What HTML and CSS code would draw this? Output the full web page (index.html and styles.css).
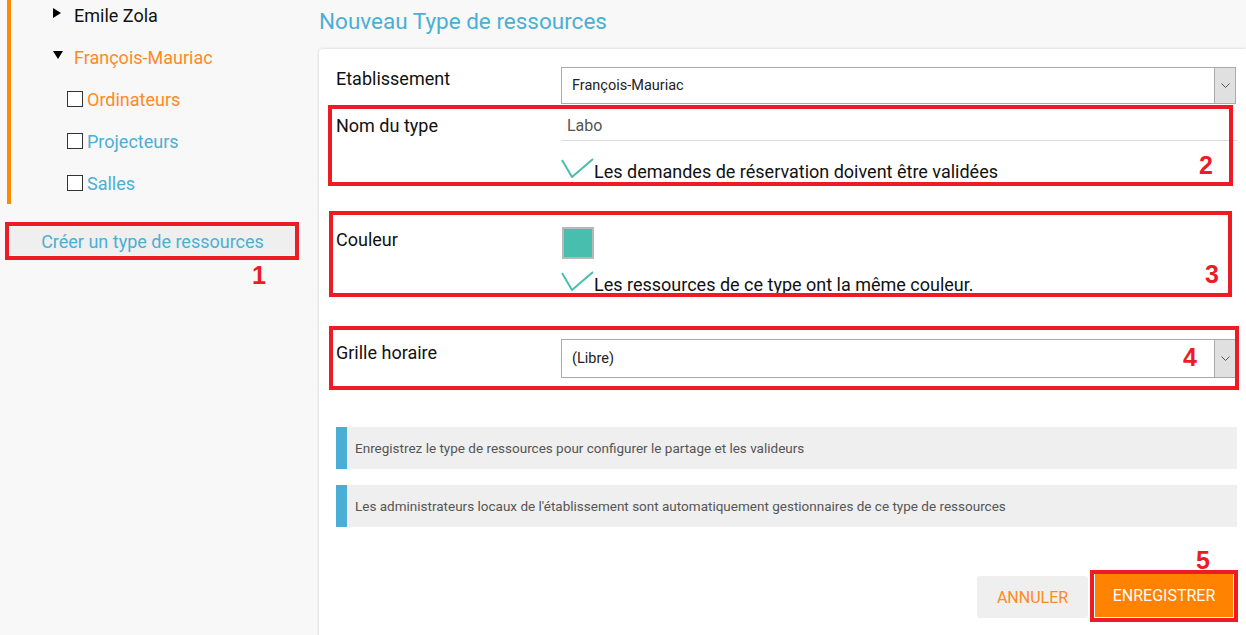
FILE: index.html
```html
<!DOCTYPE html>
<html lang="fr">
<head>
<meta charset="utf-8">
<title>Nouveau Type de ressources</title>
<link rel="stylesheet" href="styles.css">
</head>
<body>
<div class="page">
  <aside class="sidebar">
    <ul class="tree">
      <li class="node"><span class="tri tri-right"></span><span class="node-label">Emile Zola</span></li>
      <li class="node node-open"><span class="tri tri-down"></span><span class="node-label">François-Mauriac</span></li>
      <li class="leaf"><span class="box"></span><span class="leaf-label leaf-active">Ordinateurs</span></li>
      <li class="leaf"><span class="box"></span><span class="leaf-label">Projecteurs</span></li>
      <li class="leaf"><span class="box"></span><span class="leaf-label">Salles</span></li>
    </ul>
    <div class="create-wrap">
      <button class="create-btn">Créer un type de ressources</button>
      <span class="mark mark-1"><span class="num num-1">1</span></span>
    </div>
  </aside>

  <main class="main">
    <h1 class="title">Nouveau Type de ressources</h1>
    <section class="card">
      <div class="row row-etab">
        <div class="label">Etablissement</div>
        <div class="select"><span class="select-text">François-Mauriac</span><span class="select-arrow"><svg width="9" height="5" viewBox="0 0 9 5"><polyline points="0.5,0.5 4.5,4.5 8.5,0.5" fill="none" stroke="#555" stroke-width="1"/></svg></span></div>
      </div>

      <div class="row row-nom">
        <div class="label label-nom">Nom du type</div>
        <div class="field">
          <div class="input">Labo</div>
          <div class="check-line check-nom"><svg class="check" width="33" height="20" viewBox="0 0 33 20"><polyline points="1,2 11,19 32,1" fill="none" stroke="#48bfae" stroke-width="2"/></svg><span>Les demandes de réservation doivent être validées</span></div>
        </div>
        <span class="mark mark-2"><span class="num num-2">2</span></span>
      </div>

      <div class="row row-color">
        <div class="label label-color">Couleur</div>
        <div class="field">
          <div class="swatch"></div>
          <div class="check-line check-color"><svg class="check" width="33" height="20" viewBox="0 0 33 20"><polyline points="1,2 11,19 32,1" fill="none" stroke="#48bfae" stroke-width="2"/></svg><span>Les ressources de ce type ont la même couleur.</span></div>
        </div>
        <span class="mark mark-3"><span class="num num-3">3</span></span>
      </div>

      <div class="row row-grille">
        <div class="label label-grille">Grille horaire</div>
        <div class="select select-tall"><span class="select-text">(Libre)</span><span class="select-arrow"><svg width="9" height="5" viewBox="0 0 9 5"><polyline points="0.5,0.5 4.5,4.5 8.5,0.5" fill="none" stroke="#555" stroke-width="1"/></svg></span></div>
        <span class="mark mark-4"><span class="num num-4">4</span></span>
      </div>

      <div class="info info-first">Enregistrez le type de ressources pour configurer le partage et les valideurs</div>
      <div class="info">Les administrateurs locaux de l'établissement sont automatiquement gestionnaires de ce type de ressources</div>

      <div class="actions">
        <button class="btn btn-cancel">ANNULER</button>
        <div class="save-wrap">
          <button class="btn btn-save">ENREGISTRER</button>
          <span class="mark mark-5"><span class="num num-5">5</span></span>
        </div>
      </div>
    </section>
  </main>
</div>
</body>
</html>
```

FILE: styles.css
```css
* { box-sizing: border-box; }
html, body { margin: 0; padding: 0; }
body {
  background: #f8f8f8;
  font-family: Roboto, "Liberation Sans", Arial, sans-serif;
  color: #111;
  width: 1246px;
  height: 635px;
  overflow: hidden;
}
.page { display: flex; align-items: flex-start; }

/* Sidebar */
.sidebar { width: 319px; flex: none; padding-left: 7px; }
.tree {
  list-style: none;
  margin: -6px 0 0 0;
  padding: 0 0 0 42px;
  border-left: 4px solid #ff8a00;
}
.tree li { height: 42px; display: flex; align-items: center; font-size: 18px; }
.tri { width: 0; height: 0; display: inline-block; }
.tri-right {
  border-top: 5px solid transparent;
  border-bottom: 5px solid transparent;
  border-left: 8px solid #000;
  margin-right: 13px;
  margin-top: -4px;
}
.tri-down {
  border-left: 5px solid transparent;
  border-right: 5px solid transparent;
  border-top: 8px solid #000;
  margin-right: 11px;
  margin-top: -4px;
}
.node-label { color: #111; }
.node-open .node-label { color: #ff8a1f; }
.leaf { padding-left: 14px; }
.box {
  width: 16px; height: 16px;
  border: 1.5px solid #333;
  background: #fff;
  margin-right: 4px;
}
.leaf-label { color: #4bafd5; }
.leaf-label.leaf-active { color: #ff8a1f; }

.create-wrap {
  position: relative;
  margin: 23px 0 0 3px;
  width: 285px;
}
.create-btn {
  display: block;
  width: 100%;
  height: 28px;
  border: none;
  background: #efefef;
  color: #4bafd5;
  font-family: inherit;
  font-size: 18px;
  padding: 0;
}

/* Annotation marks */
.mark {
  position: absolute;
  border: 4px solid #ed1c24;
  pointer-events: none;
}
.num {
  position: absolute;
  color: #ed1c24;
  font-family: "Liberation Sans", Arial, sans-serif;
  font-weight: bold;
  font-size: 25px;
  line-height: 1;
}
.mark-1 { top: -5px; left: -5px; right: -4px; bottom: -5px; }
.num-1 { top: 37px; right: 29px; }
.mark-2 { top: -7px; left: -8px; right: 3px; bottom: -2px; }
.num-2 { right: 16px; bottom: 4px; }
.mark-3 { top: -16px; left: -7px; right: 4px; bottom: 0; }
.num-3 { right: 9px; bottom: 6px; }
.mark-4 { top: -13px; left: -7px; right: -3px; bottom: -12px; }
.num-4 { right: 38px; bottom: 16px; }
.mark-5 { top: -4px; left: -5px; right: -5px; bottom: -5px; }
.num-5 { top: -26px; right: 24px; }

/* Main */
.main { flex: 1; padding-top: 6px; }
.title {
  margin: 0;
  font-weight: normal;
  font-size: 22.5px;
  line-height: 30px;
  color: #4bafd5;
}
.card {
  position: relative;
  margin-top: 13px;
  background: #fff;
  border-radius: 4px 0 0 0;
  box-shadow: 0 0 3px rgba(0,0,0,0.18);
  padding: 18px 10px 20px 17px;
  height: 600px;
}
.row {
  position: relative;
  display: grid;
  grid-template-columns: 225px 1fr;
  align-items: start;
}
.label { font-size: 18px; line-height: 24px; color: #111; }

.select {
  position: relative;
  height: 37px;
  border: 1px solid #aaa;
  background: #fff;
  display: flex;
  align-items: center;
  font-size: 14.5px;
  color: #222;
}
.select-tall { height: 39px; }
.select-text { flex: 1; padding-left: 10px; }
.select-arrow {
  align-self: stretch;
  width: 21px;
  background: #e0e0e0;
  border-left: 1px solid #aaa;
  display: flex;
  align-items: center;
  justify-content: center;
}

.row-nom { margin-top: 8px; }
.label-nom { line-height: 28px; }
.input {
  height: 29px;
  line-height: 28px;
  border-bottom: 1px solid #ddd;
  padding-left: 6px;
  font-size: 16px;
  color: #555;
  margin-right: -1px;
}
.check-line {
  display: flex;
  align-items: center;
  height: 26px;
  font-size: 18px;
  color: #111;
}
.check { flex: none; margin-top: -6px; }
.check-nom { margin-top: 17px; }

.row-color { margin-top: 43px; }
.label-color { line-height: 26px; }
.swatch {
  width: 32px; height: 32px;
  border: 2px solid #b8b8b8;
  background: #48bfae;
  margin-left: 1px;
}
.check-color { margin-top: 12px; }

.row-grille { margin-top: 42px; }
.label-grille { line-height: 28px; }

.info {
  height: 42px;
  line-height: 42px;
  background: #efefef;
  border-left: 11px solid #4bafd5;
  padding-left: 8px;
  font-size: 13.5px;
  color: #555;
  margin-top: 16px;
  margin-right: -1px;
}
.info-first { margin-top: 49px; }

.actions {
  display: flex;
  justify-content: flex-end;
  align-items: flex-start;
  gap: 7px;
  margin-top: 47px;
  padding-right: 3px;
}
.btn {
  border: none;
  font-family: inherit;
  font-size: 16px;
  cursor: pointer;
}
.btn-cancel {
  margin-top: 2px;
  width: 111px;
  height: 42px;
  background: #efefef;
  color: #ff8a1f;
  border-radius: 3px;
}
.save-wrap { position: relative; }
.btn-save {
  display: block;
  width: 138px;
  height: 43px;
  background: #ff8200;
  color: #fff;
}
```
